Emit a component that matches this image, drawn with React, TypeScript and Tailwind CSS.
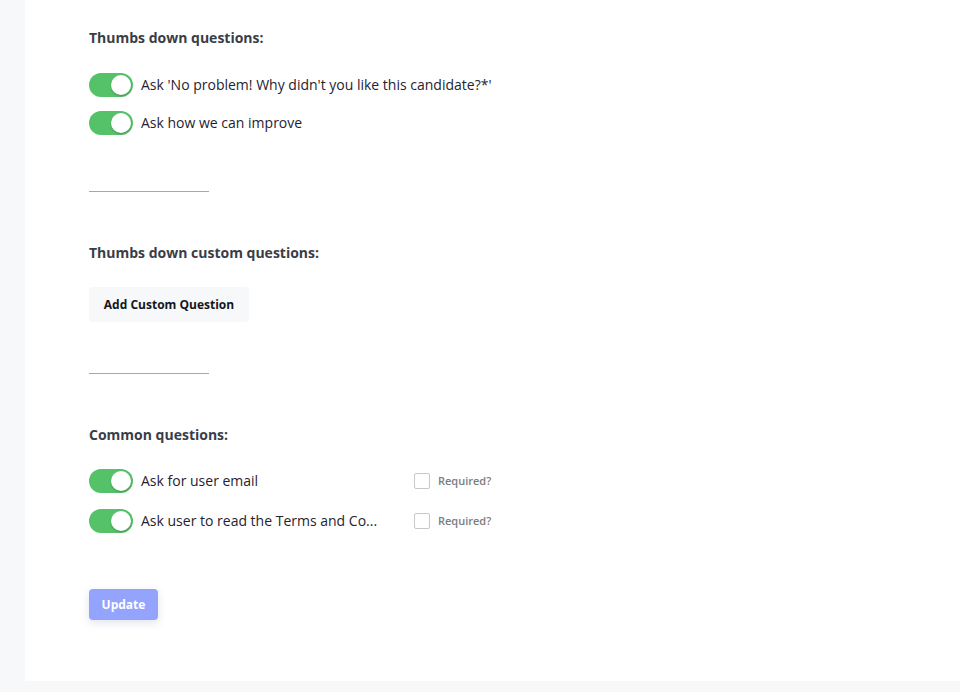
import { useState } from "react";

interface Question {
  id: string;
  label: string;
  enabled: boolean;
  required?: boolean;
}

function Toggle({ on, onChange }: { on: boolean; onChange: () => void }) {
  return (
    <button
      onClick={onChange}
      className={`relative flex-shrink-0 w-[44px] h-[24px] rounded-full transition-colors ${on ? "bg-[#55c26a]" : "bg-[#d5d8de]"}`}
    >
      <span
        className={`absolute top-[2px] w-[20px] h-[20px] rounded-full bg-white shadow-[0_1px_2px_rgba(0,0,0,0.25)] transition-all ${on ? "left-[22px]" : "left-[2px]"}`}
      />
    </button>
  );
}

function Divider() {
  return <div className="w-[120px] h-px bg-[#a8a8a8]" />;
}

export default function App() {
  const [thumbsDown, setThumbsDown] = useState<Question[]>([
    { id: "why", label: "Ask 'No problem! Why didn't you like this candidate?*'", enabled: true },
    { id: "improve", label: "Ask how we can improve", enabled: true },
  ]);
  const [common, setCommon] = useState<Question[]>([
    { id: "email", label: "Ask for user email", enabled: true, required: false },
    { id: "terms", label: "Ask user to read the Terms and Co...", enabled: true, required: false },
  ]);

  const flip = (list: Question[], id: string, key: "enabled" | "required") =>
    list.map((q) => (q.id === id ? { ...q, [key]: !q[key] } : q));

  return (
    <div className="min-h-[692px] bg-[#f7f8fa] pl-[25px] pb-[11px] font-['Open_Sans',sans-serif] text-[#1f2330]">
      <div className="bg-white px-[64px] pt-[28px] pb-[61px]">
        {/* Thumbs down */}
        <h3 className="text-[14px] leading-[20px] font-bold text-[#3a3d46]">Thumbs down questions:</h3>
        <div className="mt-[25px] flex flex-col gap-[14px]">
          {thumbsDown.map((q) => (
            <div key={q.id} className="flex items-center gap-[8px]">
              <Toggle on={q.enabled} onChange={() => setThumbsDown(flip(thumbsDown, q.id, "enabled"))} />
              <span className="text-[14px] leading-[20px]">{q.label}</span>
            </div>
          ))}
        </div>

        <div className="mt-[56px]">
          <Divider />
        </div>

        {/* Custom */}
        <h3 className="mt-[51px] text-[14px] leading-[20px] font-bold text-[#3a3d46]">Thumbs down custom questions:</h3>
        <button className="mt-[24px] h-[35px] w-[160px] rounded-[4px] bg-[#f7f8fa] text-[12px] font-bold text-[#14161c]">
          Add Custom Question
        </button>

        <div className="mt-[51px]">
          <Divider />
        </div>

        {/* Common */}
        <h3 className="mt-[51px] text-[14px] leading-[20px] font-bold text-[#3a3d46]">Common questions:</h3>
        <div className="mt-[24px] flex flex-col gap-[16px]">
          {common.map((q) => (
            <div key={q.id} className="flex items-center">
              <Toggle on={q.enabled} onChange={() => setCommon(flip(common, q.id, "enabled"))} />
              <span className="ml-[8px] w-[240px] whitespace-nowrap text-[14px] leading-[20px]">{q.label}</span>
              <label className="ml-[33px] flex items-center gap-[8px] cursor-pointer">
                <input
                  type="checkbox"
                  checked={!!q.required}
                  onChange={() => setCommon(flip(common, q.id, "required"))}
                  className="appearance-none w-[16px] h-[16px] rounded-[2px] border border-[#c8c8c8] bg-white checked:bg-[#55c26a]"
                />
                <span className="text-[11px] font-semibold text-[#7a7c82]">Required?</span>
              </label>
            </div>
          ))}
        </div>

        <button className="mt-[56px] h-[31px] w-[69px] rounded-[4px] bg-[#94a4fd] text-white text-[12px] font-bold shadow-[0_3px_8px_rgba(100,110,160,0.18)]">
          Update
        </button>
      </div>
    </div>
  );
}
